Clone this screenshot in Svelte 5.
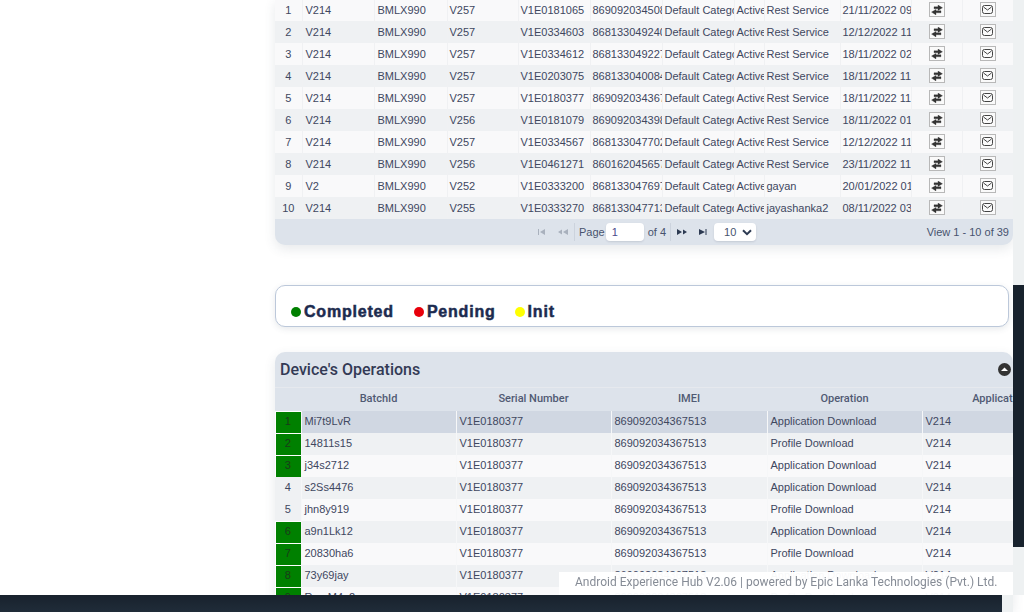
<script lang="ts">
const devices = [
  { n: 1, app: 'V214', model: 'BMLX990', os: 'V257', serial: 'V1E0181065', imei: '869092034508513', user: 'Rest Service', date: '21/11/2022 09:14:22' },
  { n: 2, app: 'V214', model: 'BMLX990', os: 'V257', serial: 'V1E0334603', imei: '868133049240513', user: 'Rest Service', date: '12/12/2022 11:02:41' },
  { n: 3, app: 'V214', model: 'BMLX990', os: 'V257', serial: 'V1E0334612', imei: '868133049227513', user: 'Rest Service', date: '18/11/2022 02:31:10' },
  { n: 4, app: 'V214', model: 'BMLX990', os: 'V257', serial: 'V1E0203075', imei: '868133040084513', user: 'Rest Service', date: '18/11/2022 11:45:03' },
  { n: 5, app: 'V214', model: 'BMLX990', os: 'V257', serial: 'V1E0180377', imei: '869092034367513', user: 'Rest Service', date: '18/11/2022 11:46:19' },
  { n: 6, app: 'V214', model: 'BMLX990', os: 'V256', serial: 'V1E0181079', imei: '869092034398513', user: 'Rest Service', date: '18/11/2022 01:20:37' },
  { n: 7, app: 'V214', model: 'BMLX990', os: 'V257', serial: 'V1E0334567', imei: '868133047702513', user: 'Rest Service', date: '12/12/2022 11:03:55' },
  { n: 8, app: 'V214', model: 'BMLX990', os: 'V256', serial: 'V1E0461271', imei: '860162045657513', user: 'Rest Service', date: '23/11/2022 11:12:08' },
  { n: 9, app: 'V2', model: 'BMLX990', os: 'V252', serial: 'V1E0333200', imei: '868133047697513', user: 'gayan', date: '20/01/2022 01:50:44' },
  { n: 10, app: 'V214', model: 'BMLX990', os: 'V255', serial: 'V1E0333270', imei: '868133047713513', user: 'jayashanka2', date: '08/11/2022 03:27:16' }
];

const operations = [
  { n: 1, batch: 'Mi7t9LvR', op: 'Application Download', done: true },
  { n: 2, batch: '14811s15', op: 'Profile Download', done: true },
  { n: 3, batch: 'j34s2712', op: 'Application Download', done: true },
  { n: 4, batch: 's2Ss4476', op: 'Application Download', done: false },
  { n: 5, batch: 'jhn8y919', op: 'Profile Download', done: false },
  { n: 6, batch: 'a9n1Lk12', op: 'Application Download', done: true },
  { n: 7, batch: '20830ha6', op: 'Profile Download', done: true },
  { n: 8, batch: '73y69jay', op: 'Application Download', done: true },
  { n: 9, batch: 'RmuM4a2p', op: 'Profile Download', done: true }
];
</script>

<main class="page">
  <section class="panel devices">
    <table>
      <colgroup>
        <col style="width:27px" /><col style="width:72px" /><col style="width:73px" /><col style="width:71px" />
        <col style="width:72px" /><col style="width:72px" /><col style="width:72px" /><col style="width:30px" />
        <col style="width:76px" /><col style="width:71px" /><col style="width:51px" /><col style="width:51px" />
      </colgroup>
      <tbody>
        {#each devices as d}
          <tr>
            <td class="num">{d.n}</td>
            <td class="wide">{d.app}</td>
            <td class="wide">{d.model}</td>
            <td>{d.os}</td>
            <td>{d.serial}</td>
            <td>{d.imei}</td>
            <td>Default Category</td>
            <td>Active</td>
            <td>{d.user}</td>
            <td>{d.date}</td>
            <td class="action">
              <span class="icon-btn">
                <svg width="12" height="10" viewBox="0 0 12 10" fill="#333" stroke="#333" stroke-width="0.3">
                  <path d="M3 1.8H7V0l4.5 2.8L7 5.4V3.8H3z" />
                  <path d="M10 5.8H5V4.4L.5 7.1 5 9.9V7.8h5z" />
                </svg>
              </span>
            </td>
            <td class="action">
              <span class="icon-btn">
                <svg width="11" height="9" viewBox="0 0 11 9" fill="none" stroke="#444">
                  <rect x="0.5" y="0.5" width="10" height="8" rx="2" />
                  <path d="M1.5 2l4 3 4-3" />
                </svg>
              </span>
            </td>
          </tr>
        {/each}
      </tbody>
    </table>
    <div class="pager">
      <div class="pager-center">
        <svg class="nav off" width="12" height="8" viewBox="0 0 12 8"><path d="M1 1h1v6H1zM8 1v6L3 4z" /></svg>
        <svg class="nav off" width="12" height="8" viewBox="0 0 12 8"><path d="M5 1.5v5L1 4zM11 1v6L6 4z" /></svg>
        <span class="sep first"></span>
        <span>Page</span>
        <span class="page-input">1</span>
        <span>of 4</span>
        <span class="sep"></span>
        <svg class="nav step" width="12" height="8" viewBox="0 0 12 8"><path d="M1 1l5 3-5 3zM7 1.5L11 4 7 6.5z" /></svg>
        <svg class="nav last" width="12" height="8" viewBox="0 0 12 8"><path d="M3 1l6 3-6 3zM9.5 1h1v6h-1z" /></svg>
        <span class="page-select">
          10
          <svg width="10" height="7" viewBox="0 0 10 7" fill="none" stroke="#2d3a52" stroke-width="2"><path d="M1 1.2l4 4 4-4" /></svg>
        </span>
      </div>
      <span class="view">View 1 - 10 of 39</span>
    </div>
  </section>

  <section class="legend">
    <span class="key"><i class="dot green"></i>Completed</span>
    <span class="key"><i class="dot red"></i>Pending</span>
    <span class="key init"><i class="dot yellow"></i>Init</span>
  </section>

  <section class="panel operations">
    <header class="title">
      <h2>Device's Operations</h2>
      <span class="collapse"><svg width="13" height="13" viewBox="0 0 13 13"><circle cx="6.5" cy="6.5" r="6.5" fill="#333" /><path d="M3 8l3.5-3.5L10 8z" fill="#fff" /></svg></span>
    </header>
    <table class="ops">
      <colgroup>
        <col style="width:26px" /><col style="width:155px" /><col style="width:155px" /><col style="width:156px" />
        <col style="width:155px" /><col style="width:156px" />
      </colgroup>
      <thead>
        <tr>
          <th></th><th>BatchId</th><th>Serial Number</th><th>IMEI</th><th>Operation</th><th>Application</th>
        </tr>
      </thead>
      <tbody>
        {#each operations as o}
          <tr class:selected={o.n === 1}>
            <td class="num" class:done={o.done}>{o.n}</td>
            <td>{o.batch}</td>
            <td>V1E0180377</td>
            <td>869092034367513</td>
            <td>{o.op}</td>
            <td>V214</td>
          </tr>
        {/each}
      </tbody>
    </table>
  </section>
</main>

<div class="edge-top"></div>
<div class="edge-dark"></div>
<div class="edge-low"></div>
<div class="bottom-bar"></div>
<div class="bottom-edge"></div>
<footer class="credit">Android Experience Hub V2.06 | powered by Epic Lanka Technologies (Pvt.) Ltd.</footer>

<style>
  :global(body) {
    margin: 0;
    background: #fff;
    overflow: hidden;
  }

  .page {
    height: 613px;
    overflow: hidden;
    box-sizing: border-box;
    padding: 0 11px 0 275px;
    margin-top: -1px;
    font-family: "Liberation Sans", Arial, sans-serif;
    font-size: 11px;
    color: #40475f;
  }

  .panel {
    width: 738px;
    background: #dde3eb;
    box-shadow: 0 4px 12px rgba(60, 70, 90, 0.12);
    overflow: hidden;
  }

  .devices {
    border-radius: 0 0 10px 10px;
  }

  table {
    table-layout: fixed;
    border-collapse: collapse;
    width: 100%;
  }

  td {
    height: 22px;
    padding: 0 2px;
    box-sizing: border-box;
    white-space: nowrap;
    overflow: hidden;
    border-right: 1px solid #f0f1f3;
    font-size: 11px;
    line-height: 22px;
    color: #40475f;
  }

  tbody tr:nth-child(odd) td {
    background: #f9f9fa;
  }

  tbody tr:nth-child(even) td {
    background: #eff1f3;
  }

  td:last-child {
    border-right: 0;
  }

  td.wide {
    padding-left: 3px;
  }

  tbody td.num {
    background: #eff1f3;
    text-align: center;
    padding: 0;
  }

  .action {
    text-align: center;
    padding: 0;
  }

  .icon-btn {
    display: inline-flex;
    align-items: center;
    justify-content: center;
    width: 16px;
    height: 15px;
    margin-top: 3px;
    box-sizing: border-box;
    border: 1px solid #b8b8b8;
    background: #fafafa;
    vertical-align: top;
  }

  .pager {
    height: 26px;
    position: relative;
    display: flex;
    align-items: center;
    justify-content: flex-end;
    padding-right: 4px;
    color: #48536e;
  }

  .pager-center {
    position: absolute;
    left: 260px;
    top: 0;
    height: 26px;
    display: flex;
    align-items: center;
    gap: 4px;
  }

  .nav {
    fill: #2d3a52;
    margin: 0 1px;
  }

  .nav.off {
    fill: #a9b1bd;
    margin: 0 2px;
  }

  .nav.step {
    margin-left: 1px;
  }

  .nav.last {
    margin-left: 3px;
  }

  .sep {
    width: 1px;
    height: 18px;
    background: #ccd3dd;
  }

  .sep.first {
    margin-left: -1px;
  }

  .page-input,
  .page-select {
    height: 18px;
    line-height: 18px;
    background: #fff;
    border-radius: 4px;
    box-shadow: 0 1px 2px rgba(60, 70, 90, 0.15);
    box-sizing: border-box;
  }

  .page-input {
    width: 38px;
    margin-left: -3px;
    padding-left: 6px;
    color: #4a4a8a;
  }

  .page-select {
    width: 42px;
    margin-left: 1px;
    padding-left: 10px;
    display: flex;
    align-items: center;
    gap: 6px;
  }

  .legend {
    width: 734px;
    height: 42px;
    box-sizing: border-box;
    margin-top: 40px;
    padding: 17px 15px 0;
    display: flex;
    align-items: flex-start;
    gap: 20px;
    background: #fff;
    border: 1px solid #bcc8da;
    border-radius: 10px;
    box-shadow: 0 2px 6px rgba(60, 70, 90, 0.12);
  }

  .key {
    display: flex;
    align-items: center;
    gap: 3px;
    font-size: 16px;
    line-height: 18px;
    font-weight: 700;
    letter-spacing: 0.8px;
    color: #1c2b4f;
    -webkit-text-stroke: 0.5px #1c2b4f;
  }

  .key.init {
    margin-left: -1px;
  }

  .dot {
    width: 10px;
    height: 10px;
    border-radius: 50%;
  }

  .green { background: #008000; }
  .red { background: #e8000b; }
  .yellow { background: #ffff00; }

  .operations {
    margin-top: 25px;
    border-radius: 10px 10px 0 0;
  }

  .title {
    height: 36px;
    display: flex;
    align-items: center;
    justify-content: space-between;
    padding: 0 2px 0 5px;
    border-bottom: 1px solid #e6e9ee;
    box-sizing: border-box;
  }

  h2 {
    margin: 0;
    font-family: Roboto, sans-serif;
    font-size: 16px;
    font-weight: 500;
    color: #333a55;
  }

  .collapse {
    display: flex;
  }

  .ops {
    width: 803px;
  }

  th {
    height: 23px;
    box-sizing: border-box;
    padding: 0 0 2px;
    font-family: Roboto, sans-serif;
    font-size: 11px;
    font-weight: 500;
    color: #505a73;
    white-space: nowrap;
    overflow: hidden;
  }

  .ops td {
    padding: 0 0 2px 3px;
    line-height: 20px;
    border-right: 1px solid #f6f7f8;
  }

  .ops tbody tr.selected td {
    background: #d0d7e2;
  }

  .ops tbody td.num {
    background: #eff1f3;
    padding: 0 0 2px;
  }

  .ops tbody tr td.num.done {
    background: #008000;
    color: #1a3a1a;
    box-shadow: inset 1px 1px 0 #fff;
  }

  .edge-top,
  .edge-dark,
  .edge-low,
  .bottom-edge,
  .bottom-bar,
  .credit {
    position: fixed;
  }

  .edge-top {
    left: 1013px;
    top: 0;
    width: 11px;
    height: 285px;
    background: #eef1f2;
  }

  .edge-dark {
    left: 1013px;
    top: 285px;
    width: 11px;
    height: 262px;
    background: #18222d;
  }

  .edge-low {
    left: 1013px;
    top: 547px;
    width: 11px;
    height: 48px;
    background: #eef1f2;
  }

  .bottom-bar {
    left: 0;
    top: 595px;
    width: 1002px;
    height: 17px;
    background: linear-gradient(#18222d, #202c39);
  }

  .bottom-edge {
    left: 1002px;
    top: 595px;
    width: 11px;
    height: 17px;
    background: #eef1f2;
  }

  .credit {
    left: 559px;
    top: 572px;
    width: 454px;
    height: 23px;
    box-sizing: border-box;
    padding-left: 16px;
    line-height: 21px;
    background: rgba(255, 255, 255, 0.96);
    font-family: Roboto, sans-serif;
    font-size: 12px;
    color: #868c96;
    white-space: nowrap;
  }
</style>
